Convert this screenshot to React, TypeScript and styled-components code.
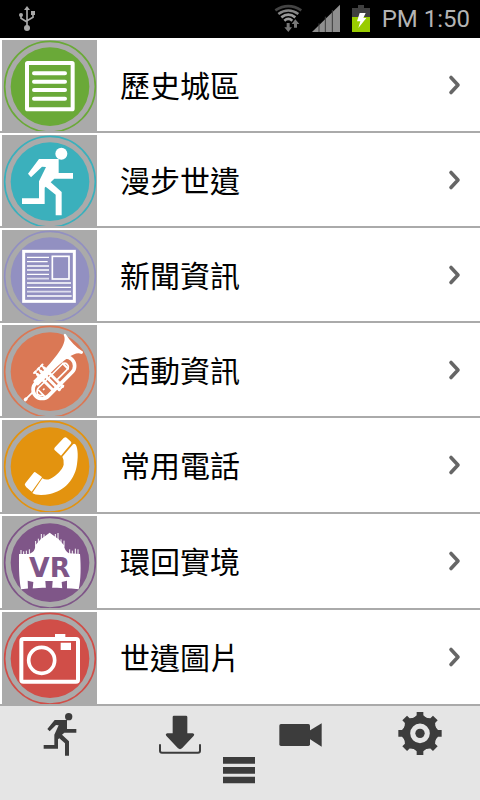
import React from "react";
import styled, { createGlobalStyle } from "styled-components";

const GlobalStyle = createGlobalStyle`
  * { box-sizing: border-box; }
  body {
    margin: 0;
    background: #ffffff;
    font-family: Roboto, "Noto Sans CJK TC", sans-serif;
  }
`;

const Screen = styled.div`
  display: flex;
  flex-direction: column;
  min-height: 100vh;
  background: #ffffff;
`;

const StatusBar = styled.header`
  display: flex;
  align-items: center;
  height: 38px;
  padding: 0 10px 0 18px;
  background: #000000;
`;

const StatusGroup = styled.div`
  display: flex;
  align-items: center;
  gap: 10px;
  margin-left: auto;
`;

const StatusIcon = styled.svg<{ $width: number }>`
  display: block;
  flex: none;
  width: ${(p) => p.$width}px;
  height: 38px;
`;

const Clock = styled.time`
  color: #b4b4b4;
  font-size: 24px;
  line-height: 38px;
  white-space: nowrap;
`;

const MenuList = styled.nav`
  display: grid;
  grid-template-rows: repeat(4, 95px) repeat(3, 96px);
`;

const MenuRow = styled.a`
  display: flex;
  align-items: center;
  padding: 2px 18px 0 2px;
  border-bottom: 2px solid #aaaaaa;
  background: #ffffff;
  color: #000000;
  text-decoration: none;
`;

const Tile = styled.svg`
  display: block;
  flex: none;
  width: 95px;
  height: 100%;
  background: #aaaaaa;
`;

const RowLabel = styled.span`
  flex: 1;
  padding: 0 0 4px 23px;
  font-family: "Noto Sans CJK TC", sans-serif;
  font-size: 30px;
  font-weight: 400;
  line-height: 40px;
`;

const Chevron = styled.svg`
  display: block;
  flex: none;
  width: 14px;
  height: 24px;
  margin-bottom: 2px;
`;

const Footer = styled.footer`
  display: flex;
  flex: 1;
  flex-direction: column;
  align-items: center;
  padding-top: 6px;
  background: #e5e5e5;
`;

const Tools = styled.div`
  display: grid;
  grid-template-columns: repeat(4, 1fr);
  justify-items: center;
  width: 100%;
`;

const IconButton = styled.button`
  display: block;
  padding: 0;
  border: 0;
  background: none;
  color: #3c3c3c;
  cursor: pointer;
`;

const ToolIcon = styled.svg`
  display: block;
  width: 44px;
  height: 44px;
`;

const MoreIcon = styled.svg`
  display: block;
  width: 36px;
  height: 28px;
`;

const DocumentArt = () => (
  <g fill="none" stroke="#fff" strokeWidth="12">
    <rect x="81" y="81" width="137" height="139" rx="2" />
    <path d="M102 112H195M102 137H195M102 162H195M102 188H195" strokeLinecap="round" />
  </g>
);

const WalkArt = () => (
  <g fill="#fff">
    <circle cx="184" cy="65" r="18" />
    <path d="M117 81H176V123H219V140H163L152 151L185 180V250H167V188L137 164L134 167V216H66V199H117V148L138 105L126 104L93 136L84 125Z" />
  </g>
);

const NewsArt = () => (
  <g fill="none" stroke="#fff">
    <rect x="71" y="76" width="152" height="150" strokeWidth="9" />
    <rect x="157" y="91" width="50" height="68" strokeWidth="5" />
    <path
      d="M81 94H147M81 107H143M81 120H147M81 132H147M81 145H147M81 171H213M81 184H213M81 210H215"
      strokeWidth="4"
    />
    <path d="M81 158H147M81 197H213" strokeWidth="5" strokeOpacity="0.7" />
  </g>
);

const TrumpetArt = () => (
  <g transform="translate(163 176) rotate(-45)">
    <path
      d="M112 -72C106 -52 72 -43 0 -40H-50V-20H20C70 -18 104 -14 110 5Q114 9 118 4C113 -20 113 -46 119 -71Q116 -77 112 -72Z"
      fill="#fff"
    />
    <g fill="none" stroke="#fff" strokeLinecap="round">
      <rect x="-76" y="-30" width="154" height="54" rx="27" strokeWidth="11" />
      <path d="M-60 10C-78 0 -64 -16 -45 -14H44C62 -14 62 8 44 8H6" strokeWidth="5" />
      <path d="M-102 -17H-72" strokeWidth="5" />
      <path d="M-106 -17H-103" strokeWidth="10" />
      <path d="M-27 -44V22M-13 -44V34M1 -44V34" strokeWidth="9" />
      <path d="M-27 -55V-44M-13 -55V-44M1 -55V-44" strokeWidth="5" />
      <path d="M-31 -55H-23M-17 -55H-9M-3 -55H5" strokeWidth="6" />
      <path d="M-14 34H4M50 -14V8" strokeWidth="6" />
      <path d="M-58 -8V18M-46 0H-44" strokeWidth="5" />
    </g>
  </g>
);

const PhoneArt = () => (
  <g fill="#fff">
    <path d="M163 104Q162 100 165 97L191 69Q196 65 200 68L213 80Q215 83 213 86L183 122Z" />
    <path d="M187 125L219 88Q222 84 226 88C232 94 236 118 231 148C226 190 195 228 150 237C130 241 104 241 97 234L127 190Q139 197 151 191C170 182 187 164 191 149Q193 135 187 125Z" />
    <path d="M75 211Q73 208 77 203L101 173Q104 169 108 173L125 185Q127 187 124 190L95 230L79 217Z" />
  </g>
);

const PanoramaArt = () => (
  <g>
    <path
      d="M57 132H88L98 126Q105 122 106 106L122 88L149 68L176 88L192 106Q194 124 207 130L240 132C243 168 243 210 236 238C180 232 118 232 63 238C56 200 57 165 57 132Z"
      fill="#fff"
    />
    <path
      d="M63 134V120M71 134V124M79 134V122M88 134V118M107 110V93M115 100V86M124 90V72M132 84V73M166 84V72M174 90V69M183 100V88M192 110V92M209 132V118M217 134V122M226 134V116M234 134V118"
      fill="none"
      stroke="#fff"
      strokeWidth="3"
    />
    <path d="M83 212L100 216L98 237H84ZM136 213H158L156 239H138ZM185 216L201 212V237H187Z" fill="#7f5688" />
    <text
      x="149"
      y="202"
      textAnchor="middle"
      fontFamily="DejaVu Sans, sans-serif"
      fontSize="80"
      fontWeight="700"
      fill="#7f5688"
    >
      VR
    </text>
  </g>
);

const CameraArt = () => (
  <g fill="none" stroke="#fff">
    <rect x="64" y="102" width="170" height="128" rx="6" strokeWidth="12" />
    <circle cx="125" cy="166" r="39" strokeWidth="11" />
    <path d="M165 87H196V98H165ZM182 113H213V135H182Z" fill="#fff" stroke="none" />
  </g>
);

interface Entry {
  label: string;
  color: string;
  top: number;
  Art: React.FC;
}

const entries: Entry[] = [
  { label: "歷史城區", color: "#6aa938", top: 12, Art: DocumentArt },
  { label: "漫步世遺", color: "#3bb0bc", top: 9, Art: WalkArt },
  { label: "新聞資訊", color: "#9290c1", top: 12, Art: NewsArt },
  { label: "活動資訊", color: "#da7855", top: 15, Art: TrumpetArt },
  { label: "常用電話", color: "#e3930f", top: 15, Art: PhoneArt },
  { label: "環回實境", color: "#7f5688", top: 18, Art: PanoramaArt },
  { label: "世遺圖片", color: "#d04e48", top: 21, Art: CameraArt },
];

const MenuEntry = ({ label, color, top, Art }: Entry) => (
  <MenuRow href="#">
    <Tile viewBox={`6 ${top} 285 276`} preserveAspectRatio="xMinYMin slice" aria-hidden="true">
      <circle cx="150" cy={top + 140} r="136" fill="none" stroke={color} strokeWidth="5" />
      <circle cx="150" cy={top + 140} r="118" fill={color} />
      <Art />
    </Tile>
    <RowLabel>{label}</RowLabel>
    <Chevron viewBox="0 0 14 24" aria-hidden="true">
      <path
        d="M3 4.5L10 12L3 19.5"
        fill="none"
        stroke="#666666"
        strokeWidth="3.6"
        strokeLinecap="round"
        strokeLinejoin="round"
      />
    </Chevron>
  </MenuRow>
);

export default function App() {
  return (
    <Screen>
      <GlobalStyle />
      <StatusBar>
        <StatusIcon $width={18} viewBox="54 0 54 114" role="img" aria-label="USB">
          <g fill="none" stroke="#a8a8a8" strokeWidth="5">
            <path d="M81 26V80M63 46V55L81 66M99 42V52L81 62" />
            <g fill="#a8a8a8" stroke="none">
              <circle cx="81" cy="84" r="9" />
              <circle cx="63" cy="45" r="6" />
              <path d="M93 33H105V45H93ZM81 18L90 30H72Z" />
            </g>
          </g>
        </StatusIcon>
        <StatusGroup>
          <StatusIcon $width={30} viewBox="99 0 90 114" role="img" aria-label="Wi-Fi">
            <g fill="none" strokeWidth="8">
              <path d="M109 31Q148 6 187 31" stroke="#444" />
              <path d="M118 42Q148 21 178 42" stroke="#858585" />
              <path d="M127 52Q148 36 169 52" stroke="#999" />
              <path d="M136 62Q148 51 160 62" stroke="#999" />
            </g>
            <path
              d="M143 69H152V82H159L148 96L136 82H143ZM165 83V72H158L169 58L181 72H174V83Z"
              fill="#777"
            />
          </StatusIcon>
          <StatusIcon $width={30} viewBox="213 0 90 114" role="img" aria-label="Signal">
            <path d="M213 96L297 14V96Z" fill="#8f8f8f" />
            <path d="M234 70V96M253 50V96M274 30V96" stroke="#3c3c3c" strokeWidth="3" />
          </StatusIcon>
          <StatusIcon $width={20} viewBox="333 0 60 114" role="img" aria-label="Charging">
            <path d="M333 24H351V15H369V24H387V51H333Z" fill="#404040" />
            <path d="M333 51H387V96H333Z" fill="#99cc00" />
            <path d="M356 39H374L367 54H376L352 84L358 64H348Z" fill="#fff" />
          </StatusIcon>
          <Clock>PM 1:50</Clock>
        </StatusGroup>
      </StatusBar>
      <MenuList>
        {entries.map((entry) => (
          <MenuEntry key={entry.label} {...entry} />
        ))}
      </MenuList>
      <Footer>
        <Tools>
          <IconButton aria-label="漫步">
            <ToolIcon viewBox="114 36 132 132" fill="currentColor">
              <circle cx="206" cy="50" r="11" />
              <path d="M164 60H201V87H229V98H193L186 104L207 124V167H195V130L178 115L174 118V146H131V135H163V104L176 76L168 75L149 94L142 87Z" />
            </ToolIcon>
          </IconButton>
          <IconButton aria-label="下載">
            <ToolIcon viewBox="474 36 132 132" fill="currentColor">
              <path d="M518 51Q518 47 522 47H558Q562 47 562 51V100H578Q586 102 580 109L546 145Q540 150 534 145L500 109Q494 102 502 100H518Z" />
              <path
                d="M480 133V152Q480 158 486 158H594Q600 158 600 152V133"
                fill="none"
                stroke="currentColor"
                strokeWidth="6"
              />
            </ToolIcon>
          </IconButton>
          <IconButton aria-label="錄影">
            <ToolIcon viewBox="114 36 132 132" fill="currentColor">
              <rect x="118" y="72" width="92" height="66" rx="5" />
              <path d="M208 92L245 70V140L208 116Z" />
            </ToolIcon>
          </IconButton>
          <IconButton aria-label="設定">
            <ToolIcon viewBox="474 36 132 132">
              <circle cx="540" cy="100" r="40" fill="none" stroke="currentColor" strokeWidth="21" />
              <circle cx="540" cy="100" r="14" fill="currentColor" />
              {[0, 45, 90, 135, 180, 225, 270, 315].map((angle) => (
                <path
                  key={angle}
                  d="M518 56L530 46V35H550V46L562 56Z"
                  fill="currentColor"
                  transform={`rotate(${angle} 540 100)`}
                />
              ))}
            </ToolIcon>
          </IconButton>
        </Tools>
        <IconButton aria-label="選單">
          <MoreIcon viewBox="666 168 108 84" fill="currentColor">
            <path d="M669 171H765V191H669ZM669 201H765V221H669ZM669 230H765V250H669Z" />
          </MoreIcon>
        </IconButton>
      </Footer>
    </Screen>
  );
}
